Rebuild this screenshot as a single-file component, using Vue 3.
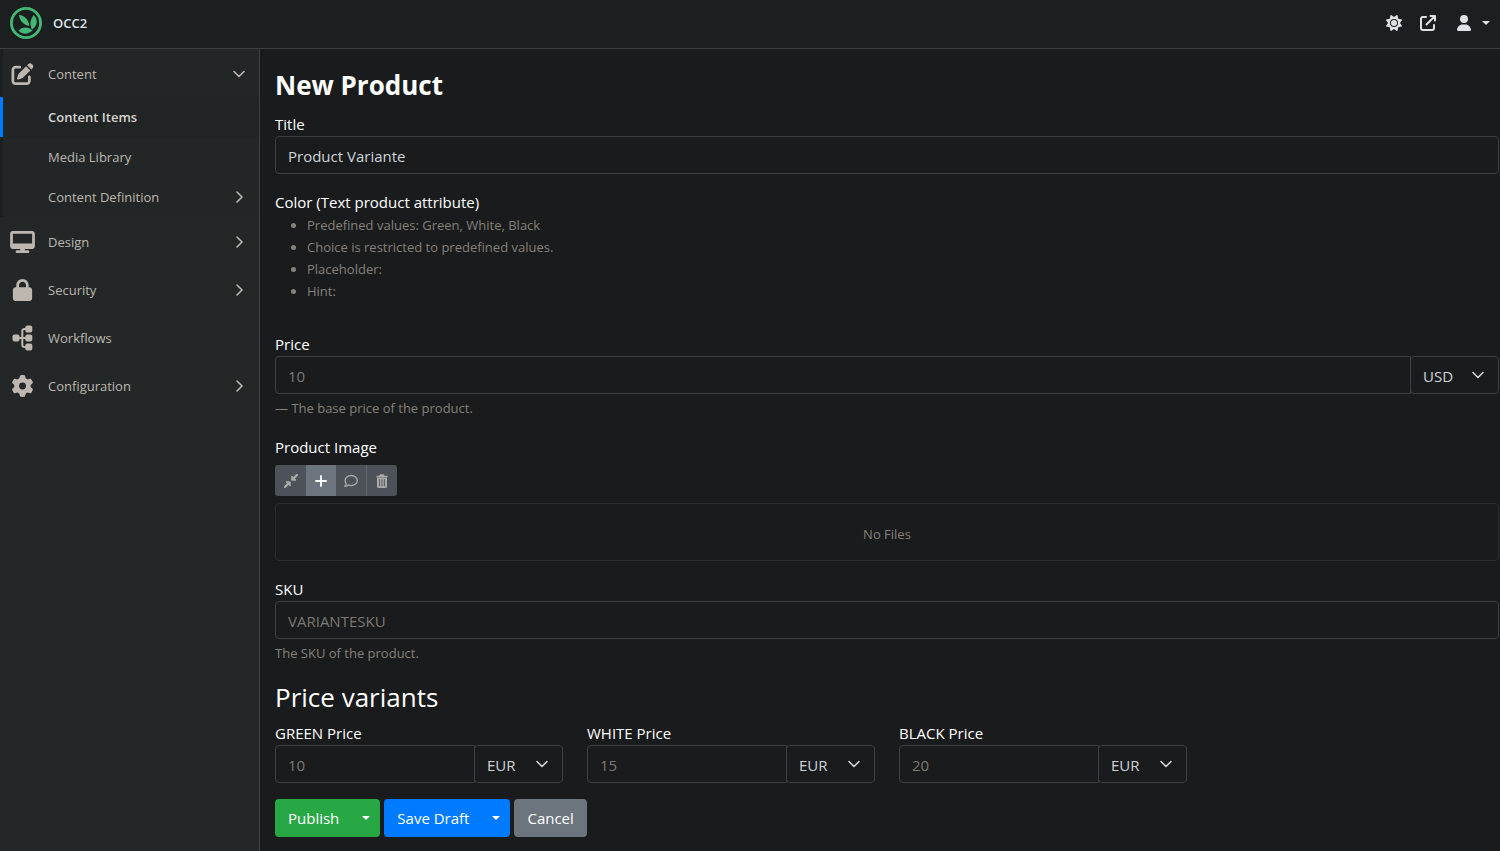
<script setup>
import { ref } from 'vue'

const title = ref('Product Variante')
const currency = ref('USD')

const contentItems = [
  { label: 'Content Items', active: true },
  { label: 'Media Library' },
  { label: 'Content Definition', expandable: true },
]

const sections = [
  { label: 'Design', icon: 'desktop', expandable: true },
  { label: 'Security', icon: 'lock', expandable: true },
  { label: 'Workflows', icon: 'flow' },
  { label: 'Configuration', icon: 'gear', expandable: true },
]

const attributeNotes = [
  'Predefined values: Green, White, Black',
  'Choice is restricted to predefined values.',
  'Placeholder:',
  'Hint:',
]

const variants = ref([
  { id: 'green', label: 'GREEN Price', placeholder: '10', currency: 'EUR' },
  { id: 'white', label: 'WHITE Price', placeholder: '15', currency: 'EUR' },
  { id: 'black', label: 'BLACK Price', placeholder: '20', currency: 'EUR' },
])
</script>

<template>
  <div class="shell">
    <header class="topbar">
      <a href="#" class="brand">
        <svg class="logo" viewBox="0 0 32 32" width="32" height="32" aria-hidden="true">
          <circle cx="16" cy="16" r="14.6" fill="none" stroke="#41b874" stroke-width="2.8" />
          <path d="M9 7.8c5.500 1 9.500 4.500 10.300 11.200C13.500 18 9.600 14 9 7.800z" fill="#41b874" />
          <path d="M23.800 8c4.200 4.500 4.200 10.500-1.800 14.600-2.700-5.600-1.600-10.600 1.800-14.600z" fill="#41b874" />
          <path d="M8.500 23.800c4-4.300 10-4.200 14-.2-4.200 4-10 4.200-14 .2z" fill="#41b874" />
        </svg>
        <span>OCC2</span>
      </a>
      <nav class="tools" aria-label="Account">
        <button type="button" aria-label="Theme">
          <svg viewBox="0 0 512 512" width="16" height="16"><path fill="currentColor" d="M361.500 1.200c5 2.100 8.600 6.600 9.600 11.900L391 121l107.900 19.800c5.300 1 9.800 4.600 11.900 9.600s1.500 10.700-1.600 15.200L446.900 256l62.300 90.300c3.100 4.500 3.700 10.200 1.600 15.200s-6.600 8.600-11.900 9.600L391 391 371.100 498.900c-1 5.300-4.600 9.800-9.600 11.900s-10.700 1.500-15.200-1.600L256 446.900l-90.300 62.300c-4.500 3.100-10.200 3.700-15.200 1.600s-8.600-6.600-9.600-11.900L121 391 13.100 371.100c-5.300-1-9.800-4.600-11.900-9.600s-1.500-10.700 1.600-15.200L65.100 256 2.800 165.700c-3.100-4.500-3.700-10.200-1.600-15.200s6.600-8.600 11.900-9.600L121 121 140.900 13.100c1-5.300 4.600-9.800 9.600-11.900s10.700-1.500 15.200 1.600L256 65.100 346.300 2.800c4.500-3.100 10.200-3.700 15.200-1.600zM160 256a96 96 0 1 1 192 0 96 96 0 1 1 -192 0zm224 0a128 128 0 1 0 -256 0 128 128 0 1 0 256 0z" /></svg>
        </button>
        <a href="#" aria-label="Open site">
          <svg viewBox="0 0 16 16" width="16" height="16" fill="none" stroke="currentColor" stroke-width="2" stroke-linecap="round" stroke-linejoin="round"><path d="M6 2H3a2 2 0 0 0-2 2v9a2 2 0 0 0 2 2h9a2 2 0 0 0 2-2v-3" /><path d="M10.500 1H15v4.500M14.500 1.500L6.500 9.500" /></svg>
        </a>
        <button type="button" class="user" aria-label="User menu">
          <svg viewBox="0 0 448 512" width="14" height="16"><path fill="currentColor" d="M224 256A128 128 0 1 0 224 0a128 128 0 1 0 0 256zm-45.700 48C79.800 304 0 383.800 0 482.300C0 498.700 13.300 512 29.700 512H418.300c16.400 0 29.700-13.300 29.700-29.700C448 383.800 368.200 304 269.700 304H178.300z" /></svg>
          <span class="caret"></span>
        </button>
      </nav>
    </header>

    <div class="body">
      <nav class="sidebar" aria-label="Admin">
        <div class="group">
          <a href="#" class="entry">
            <svg class="icon" viewBox="0 0 512 512" width="22" height="22"><path fill="currentColor" d="M471.600 21.700c-21.900-21.900-57.300-21.900-79.200 0L362.300 51.700l97.900 97.900 30.100-30.100c21.900-21.900 21.900-57.300 0-79.200L471.600 21.700zm-299.200 220c-6.100 6.100-10.800 13.600-13.500 21.900l-29.600 88.800c-2.900 8.600-.6 18.100 5.800 24.600s15.900 8.700 24.600 5.800l88.800-29.600c8.200-2.700 15.700-7.400 21.900-13.500L437.700 172.300 339.700 74.300 172.400 241.700zM96 64C43 64 0 107 0 160V416c0 53 43 96 96 96H352c53 0 96-43 96-96V320c0-17.700-14.300-32-32-32s-32 14.300-32 32v96c0 17.700-14.300 32-32 32H96c-17.700 0-32-14.300-32-32V160c0-17.700 14.300-32 32-32h96c17.700 0 32-14.300 32-32s-14.300-32-32-32H96z" /></svg>
            <span class="text">Content</span>
            <svg class="chev" viewBox="0 0 12 12" width="12" height="12"><path d="M1 3.500l5 5 5-5" /></svg>
          </a>
          <a v-for="item in contentItems" :key="item.label" href="#" class="sub" :class="{ active: item.active }">
            <span class="text">{{ item.label }}</span>
            <svg v-if="item.expandable" class="chev" viewBox="0 0 12 12" width="12" height="12"><path d="M4 1l5 5-5 5" /></svg>
          </a>
        </div>
        <a v-for="s in sections" :key="s.label" href="#" class="entry">
          <svg v-if="s.icon === 'desktop'" class="icon" viewBox="0 0 576 512" width="25" height="22"><path fill="currentColor" d="M64 0C28.700 0 0 28.700 0 64V352c0 35.300 28.700 64 64 64H240l-10.700 32H160c-17.700 0-32 14.300-32 32s14.300 32 32 32H416c17.700 0 32-14.300 32-32s-14.300-32-32-32H346.700L336 416H512c35.300 0 64-28.700 64-64V64c0-35.300-28.700-64-64-64H64zM512 64V288H64V64H512z" /></svg>
          <svg v-else-if="s.icon === 'lock'" class="icon" viewBox="0 0 448 512" width="20" height="22"><path fill="currentColor" d="M144 144v48H304V144c0-44.200-35.800-80-80-80s-80 35.800-80 80zM80 192V144C80 64.500 144.500 0 224 0s144 64.500 144 144v48h16c35.300 0 64 28.700 64 64V448c0 35.300-28.700 64-64 64H64c-35.300 0-64-28.700-64-64V256c0-35.300 28.700-64 64-64H80z" /></svg>
          <svg v-else-if="s.icon === 'flow'" class="icon" viewBox="0 0 20 26" width="20" height="26"><g fill="currentColor"><rect x="0" y="9.500" width="7" height="7" rx="2" /><rect x="12.800" y="0.400" width="7" height="7" rx="2" /><rect x="12.800" y="9.500" width="7" height="7" rx="2" /><rect x="12.800" y="18.600" width="7" height="7" rx="2" /></g><path d="M6 13h8M14 3.900h-2.200a2 2 0 0 0-2 2v14.200a2 2 0 0 0 2 2H14" fill="none" stroke="currentColor" stroke-width="2" /></svg>
          <svg v-else class="icon" viewBox="0 0 512 512" width="22" height="22"><path fill="currentColor" d="M495.900 166.600c3.200 8.700 .5 18.400-6.400 24.600l-43.300 39.400c1.100 8.300 1.700 16.800 1.700 25.400s-.6 17.100-1.700 25.400l43.300 39.400c6.900 6.200 9.600 15.900 6.400 24.600c-4.400 11.900-9.700 23.300-15.800 34.300l-4.700 8.100c-6.600 11-14 21.400-22.100 31.200c-5.900 7.200-15.700 9.600-24.500 6.800l-55.700-17.700c-13.400 10.300-28.200 18.900-44 25.400l-12.500 57.100c-2 9.100-9 16.300-18.200 17.800c-13.800 2.300-28 3.500-42.500 3.500s-28.700-1.200-42.500-3.500c-9.200-1.500-16.200-8.700-18.200-17.800l-12.500-57.100c-15.800-6.500-30.600-15.100-44-25.400L83.100 425.900c-8.800 2.800-18.600 .3-24.500-6.800c-8.100-9.800-15.500-20.200-22.100-31.200l-4.700-8.100c-6.100-11-11.400-22.400-15.800-34.300c-3.200-8.700-.5-18.400 6.400-24.600l43.300-39.400C64.600 273.100 64 264.600 64 256s.6-17.100 1.700-25.400L22.400 191.200c-6.900-6.200-9.600-15.900-6.400-24.600c4.400-11.900 9.700-23.300 15.800-34.300l4.700-8.100c6.600-11 14-21.400 22.100-31.200c5.900-7.200 15.700-9.600 24.500-6.800l55.700 17.700c13.400-10.300 28.200-18.900 44-25.400l12.500-57.100c2-9.100 9-16.300 18.200-17.800C227.300 1.200 241.500 0 256 0s28.700 1.200 42.500 3.500c9.200 1.500 16.200 8.700 18.200 17.800l12.500 57.100c15.800 6.500 30.600 15.100 44 25.400l55.700-17.700c8.800-2.800 18.600-.3 24.500 6.800c8.100 9.800 15.500 20.200 22.100 31.200l4.700 8.100c6.100 11 11.400 22.400 15.800 34.300zM256 336a80 80 0 1 0 0-160 80 80 0 1 0 0 160z" /></svg>
          <span class="text">{{ s.label }}</span>
          <svg v-if="s.expandable" class="chev" viewBox="0 0 12 12" width="12" height="12"><path d="M4 1l5 5-5 5" /></svg>
        </a>
      </nav>

      <main class="main">
        <h1>New Product</h1>

        <form @submit.prevent>
          <div class="field">
            <label for="title">Title</label>
            <input id="title" v-model="title" type="text" class="control" />
          </div>

          <div class="field attribute">
            <span class="label">Color (Text product attribute)</span>
            <ul class="notes">
              <li v-for="note in attributeNotes" :key="note">{{ note }}</li>
            </ul>
          </div>

          <div class="field">
            <label for="price">Price</label>
            <div class="input-group">
              <input id="price" type="text" class="control" placeholder="10" />
              <div class="select">
                <select v-model="currency" aria-label="Price currency">
                  <option>USD</option>
                  <option>EUR</option>
                </select>
                <svg class="chev" viewBox="0 0 12 12" width="12" height="12"><path d="M1 3.500l5 5 5-5" /></svg>
              </div>
            </div>
            <p class="hint">— The base price of the product.</p>
          </div>

          <div class="field">
            <span class="label">Product Image</span>
            <div class="toolbar">
              <button type="button" disabled aria-label="Compress">
                <svg viewBox="0 0 14 14" width="14" height="14"><g fill="currentColor" stroke="currentColor"><path d="M7.800 2v4.200H12z M6.200 12V7.800H2z" stroke-width="1" stroke-linejoin="round" /><path d="M9 5l4-4M5 9l-4 4" stroke-width="2.400" stroke-linecap="round" /></g></svg>
              </button>
              <button type="button" class="add" aria-label="Add">
                <svg viewBox="0 0 14 14" width="14" height="14" fill="none" stroke="currentColor" stroke-width="1.800" stroke-linecap="round"><path d="M7 2v10M2 7h10" /></svg>
              </button>
              <button type="button" disabled aria-label="Comment">
                <svg viewBox="0 0 14 14" width="14" height="14" fill="none" stroke="currentColor" stroke-width="1.300" stroke-linejoin="round"><path d="M7.200 1.500c3.500 0 6.100 2.200 6.100 5s-2.600 5-6.100 5c-1 0-2-.2-2.800-.6-1 .9-2.200 1.400-3.600 1.400.7-.7 1.300-1.600 1.500-2.600C1.500 8.800 1.100 7.700 1.100 6.500c0-2.800 2.600-5 6.100-5z" /></svg>
              </button>
              <button type="button" disabled aria-label="Delete">
                <svg viewBox="0 0 14 14" width="14" height="14"><path d="M1.500 1.800h3L5.200.3h3.600l.7 1.500h3v1.600h-11z" fill="currentColor" /><path fill="currentColor" fill-rule="evenodd" d="M2 3.800h10v8.700a1.500 1.500 0 0 1-1.500 1.500h-7A1.500 1.500 0 0 1 2 12.500zM4.200 5.300v6.900h.9V5.300zM6.550 5.300v6.900h.9V5.300zM8.900 5.300v6.900h.9V5.300z" /></svg>
              </button>
            </div>
            <div class="files">No Files</div>
          </div>

          <div class="field">
            <label for="sku">SKU</label>
            <input id="sku" type="text" class="control" placeholder="VARIANTESKU" />
            <p class="hint">The SKU of the product.</p>
          </div>

          <h2>Price variants</h2>
          <div class="variants">
            <div v-for="v in variants" :key="v.id" class="variant">
              <label :for="v.id">{{ v.label }}</label>
              <div class="input-group">
                <input :id="v.id" type="text" class="control" :placeholder="v.placeholder" />
                <div class="select">
                  <select v-model="v.currency" :aria-label="v.label + ' currency'">
                    <option>EUR</option>
                    <option>USD</option>
                  </select>
                  <svg class="chev" viewBox="0 0 12 12" width="12" height="12"><path d="M1 3.500l5 5 5-5" /></svg>
                </div>
              </div>
            </div>
          </div>

          <div class="actions">
            <div class="split publish">
              <button type="submit">Publish</button>
              <button type="button" class="toggle" aria-label="More publish options"><span class="caret"></span></button>
            </div>
            <div class="split draft">
              <button type="button">Save Draft</button>
              <button type="button" class="toggle" aria-label="More draft options"><span class="caret"></span></button>
            </div>
            <button type="button" class="cancel">Cancel</button>
          </div>
        </form>
      </main>
    </div>
  </div>
</template>

<style>
body {
  margin: 0;
  background: #1a1b1c;
}
</style>

<style scoped>
* {
  box-sizing: border-box;
}

.shell {
  display: flex;
  flex-direction: column;
  min-height: 100vh;
  background: #1a1b1c;
  color: #fff;
  font-family: "Open Sans", "Noto Sans", sans-serif;
  font-size: 15px;
  line-height: 24px;
}

button,
input,
select {
  font: inherit;
  color: inherit;
  margin: 0;
}

a {
  color: inherit;
  text-decoration: none;
}

svg {
  display: block;
  flex: none;
}

.chev path {
  fill: none;
  stroke: currentColor;
  stroke-width: 1.6;
  stroke-linecap: round;
  stroke-linejoin: round;
}

.caret {
  display: block;
  border: 4px solid transparent;
  border-top-color: currentColor;
  border-bottom: 0;
}

.topbar {
  display: flex;
  align-items: center;
  justify-content: space-between;
  height: 49px;
  padding: 0 10px 2px;
  border-bottom: 1px solid #3b4042;
  background: #1c1f20;
  color: #dee2e6;
}

.brand {
  display: flex;
  align-items: center;
  gap: 11px;
  font-size: 13px;
  font-weight: 600;
}

.tools {
  display: flex;
  align-items: center;
  gap: 18px;
}

.tools button {
  display: flex;
  align-items: center;
  padding: 0;
  border: 0;
  background: none;
}

.tools .user {
  gap: 11px;
  padding-left: 3px;
}

.body {
  display: flex;
  flex: 1;
}

.sidebar {
  flex: none;
  width: 260px;
  border-right: 1px solid #3b4042;
  background: #232728;
  color: #bdb7af;
  font-size: 13px;
}

.group {
  margin-bottom: 1px;
  border-left: 3px solid #1c1f20;
  background: #222627;
}

.entry,
.sub {
  display: flex;
  align-items: center;
  padding-right: 14px;
}

.entry {
  height: 48px;
}

.group .entry {
  margin-left: -3px;
  padding-top: 2px;
}

.sub {
  height: 40px;
  margin-left: -3px;
  padding-left: 45px;
  border-left: 3px solid transparent;
}

.sub.active {
  border-left-color: #007bff;
  background: #202425;
  background-clip: padding-box;
  color: #d8d4cf;
  font-weight: 600;
}

.text {
  flex: 1;
}

.icon {
  box-sizing: content-box;
  width: 25px;
  margin: 0 13px 0 10px;
}

.main {
  flex: 1;
  min-width: 0;
  padding: 16px 1px 14px 15px;
}

h1,
h2 {
  margin: 0 0 7px;
  font-size: 26px;
  line-height: 40px;
}

h2 {
  font-weight: 400;
  line-height: 34px;
}

.field {
  margin-bottom: 16px;
}

.attribute {
  margin-bottom: 30px;
}

label,
.label {
  display: block;
}

.control {
  display: block;
  width: 100%;
  height: 38px;
  padding: 2px 12px 0;
  border: 1px solid #3b4042;
  border-radius: 4px;
  background: transparent;
  color: #ced4da;
}

.control::placeholder {
  color: #7b7974;
  opacity: 1;
}

.notes {
  margin: 0;
  padding-left: 32px;
  color: #85817b;
  font-size: 13px;
  line-height: 22px;
}

.input-group {
  display: flex;
}

.input-group .control {
  flex: 1;
  width: auto;
  min-width: 0;
  border-radius: 4px 0 0 4px;
}

.select {
  position: relative;
  flex: none;
  width: 89px;
  margin-left: -1px;
  color: #ced4da;
}

.select select {
  display: block;
  width: 100%;
  height: 38px;
  padding: 2px 12px 0;
  border: 1px solid #3b4042;
  border-radius: 4px;
  appearance: none;
  background: transparent;
}

.select .chev {
  position: absolute;
  top: 13px;
  right: 15px;
  pointer-events: none;
}

.hint {
  margin: 4px 0 0;
  color: #85817b;
  font-size: 13px;
  line-height: 21px;
}

.toolbar {
  display: inline-flex;
  margin: 6px 0 7px;
  overflow: hidden;
  border-radius: 3px;
  vertical-align: top;
}

.toolbar button {
  display: flex;
  align-items: center;
  justify-content: center;
  width: 31px;
  height: 31px;
  padding: 0;
  border: 0;
  background: #4c5257;
  color: #aaa9a7;
}

.toolbar .add {
  width: 30px;
  background: #6c757d;
  color: #fff;
}

.toolbar button:nth-child(3) {
  width: 30px;
}

.toolbar button:last-child {
  border-left: 1px solid #62686d;
}

.files {
  height: 58px;
  border: 1px solid #2a2d2f;
  border-radius: 4px;
  color: #85817b;
  font-size: 13px;
  line-height: 60px;
  text-align: center;
}

.variants {
  display: flex;
  flex-wrap: wrap;
  gap: 24px;
}

.variant {
  width: 288px;
}

.actions {
  display: flex;
  gap: 4px;
  margin-top: 16px;
}

.split {
  display: flex;
}

.actions button {
  height: 38px;
  padding: 0 13px;
  border: 0;
  border-radius: 4px;
  color: #fff;
}

.split button:first-child {
  border-radius: 4px 0 0 4px;
}

.actions .toggle {
  padding: 0 10px;
  border-radius: 0 4px 4px 0;
}

.publish button {
  background: #28a745;
}

.draft button {
  background: #007bff;
}

.actions .cancel {
  background: #6c757d;
}
</style>
